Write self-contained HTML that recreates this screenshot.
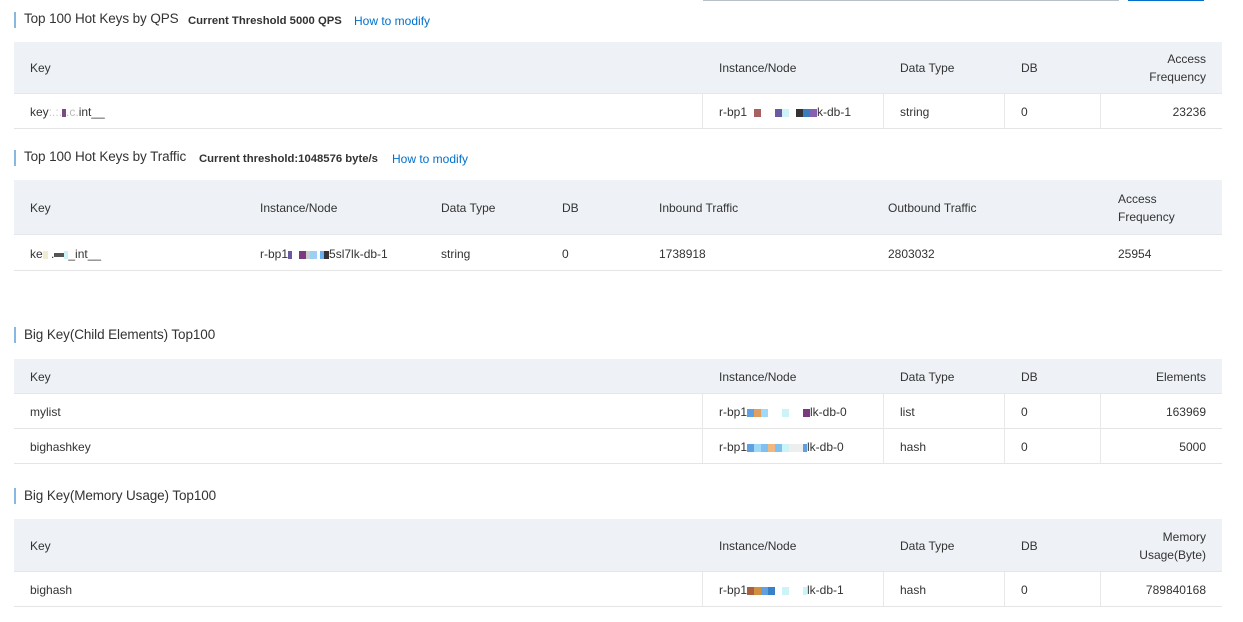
<!DOCTYPE html>
<html><head><meta charset="utf-8"><style>
*{margin:0;padding:0;box-sizing:border-box}
body{width:1243px;height:622px;background:#fff;position:relative;overflow:hidden;font-family:"Liberation Sans",Arial,sans-serif;font-size:12px;color:#333}
div,span{position:absolute;white-space:nowrap}
.bar{left:14px;width:2px;height:16px;background:#88b7e0}
.ti{left:24px;font-size:13.5px;color:#333;line-height:16px;letter-spacing:-0.1px}
.th{font-size:11.3px;font-weight:bold;color:#333;line-height:16px}
.lk{font-size:12px;color:#0070cc;line-height:16px}
.hd{left:14px;width:1208px;background:#eef1f5;border-bottom:1px solid #e3e6ea}
.rw{left:14px;width:1208px;border-bottom:1px solid #e5e5e5}
.c{line-height:14px}
.r{text-align:right;right:37px;line-height:18px}
.v{width:1px;background:#e8e8e8}
i{display:inline-block;width:7px;height:8px;vertical-align:middle}
</style></head><body>
<div style="left:703px;top:0;width:416px;height:1px;background:#b8c0c8"></div>
<div style="left:1128px;top:0;width:76px;height:1px;background:#0070cc"></div>

<div class="bar" style="top:12px"></div>
<div class="ti" style="top:11px">Top 100 Hot Keys by QPS</div>
<div class="th" style="left:188px;top:13px">Current Threshold 5000 QPS</div>
<div class="lk" style="left:354px;top:13px">How to modify</div>
<div class="hd" style="top:42px;height:52px"></div>
<div class="c" style="left:30px;top:61px">Key</div>
<div class="c" style="left:719px;top:61px">Instance/Node</div>
<div class="c" style="left:900px;top:61px">Data Type</div>
<div class="c" style="left:1021px;top:61px">DB</div>
<div class="r" style="top:50px;width:100px">Access<br>Frequency</div>
<div class="rw" style="top:94px;height:35px"></div>
<div class="v" style="left:702px;top:94px;height:34px"></div>
<div class="v" style="left:883px;top:94px;height:34px"></div>
<div class="v" style="left:1004px;top:94px;height:34px"></div>
<div class="v" style="left:1100px;top:94px;height:34px"></div>
<div class="c" style="left:30px;top:105px">key<span style="position:static;color:#ccc">:.:.</span><i style="background:#7a4a86;width:4px"></i><span style="position:static;color:#bbb">.c.</span>int__</div>
<div class="c" style="left:719px;top:105px">r-bp1<i style="background:#fff"></i><i style="background:#a86060"></i><i style="background:#fff"></i><i style="background:#fff"></i><i style="background:#6a5aa0"></i><i style="background:#ccf4f8"></i><i style="background:#fff"></i><i style="background:#333"></i><i style="background:#3a7cc0"></i><i style="background:#8860b0"></i>k-db-1</div>
<div class="c" style="left:900px;top:105px">string</div>
<div class="c" style="left:1021px;top:105px">0</div>
<div class="r" style="top:103px">23236</div>

<div class="bar" style="top:150px"></div>
<div class="ti" style="top:149px">Top 100 Hot Keys by Traffic</div>
<div class="th" style="left:199px;top:151px">Current threshold:1048576 byte/s</div>
<div class="lk" style="left:392px;top:151px">How to modify</div>
<div class="hd" style="top:180px;height:55px"></div>
<div class="c" style="left:30px;top:201px">Key</div>
<div class="c" style="left:260px;top:201px">Instance/Node</div>
<div class="c" style="left:441px;top:201px">Data Type</div>
<div class="c" style="left:562px;top:201px">DB</div>
<div class="c" style="left:659px;top:201px">Inbound Traffic</div>
<div class="c" style="left:888px;top:201px">Outbound Traffic</div>
<div style="left:1118px;top:190px;line-height:18px">Access<br>Frequency</div>
<div class="rw" style="top:235px;height:36px"></div>
<div class="c" style="left:30px;top:247px">ke<i style="background:#f0ecd0;width:5px"></i>&nbsp;.<i style="background:#555;width:10px;height:4px"></i><i style="background:#ccf4f8;width:4px"></i>_int__</div>
<div class="c" style="left:260px;top:247px">r-bp1<i style="background:#6a5aa0;width:4px"></i><i style="background:#fff"></i><i style="background:#7a3a80"></i><i style="background:#ccc;width:4px"></i><i style="background:#9cd0f0"></i><i style="background:#fff;width:3px"></i><i style="background:#6ab0f0;width:4px"></i><i style="background:#333;width:5px"></i>5sl7lk-db-1</div>
<div class="c" style="left:441px;top:247px">string</div>
<div class="c" style="left:562px;top:247px">0</div>
<div class="c" style="left:659px;top:247px">1738918</div>
<div class="c" style="left:888px;top:247px">2803032</div>
<div class="c" style="left:1118px;top:247px">25954</div>

<div class="bar" style="top:327px"></div>
<div class="ti" style="top:327px">Big Key(Child Elements) Top100</div>
<div class="hd" style="top:359px;height:35px"></div>
<div class="c" style="left:30px;top:370px">Key</div>
<div class="c" style="left:719px;top:370px">Instance/Node</div>
<div class="c" style="left:900px;top:370px">Data Type</div>
<div class="c" style="left:1021px;top:370px">DB</div>
<div class="r" style="top:368px">Elements</div>
<div class="rw" style="top:394px;height:35px"></div>
<div class="rw" style="top:429px;height:35px"></div>
<div class="v" style="left:702px;top:394px;height:69px"></div>
<div class="v" style="left:883px;top:394px;height:69px"></div>
<div class="v" style="left:1004px;top:394px;height:69px"></div>
<div class="v" style="left:1100px;top:394px;height:69px"></div>
<div class="c" style="left:30px;top:405px">mylist</div>
<div class="c" style="left:719px;top:405px">r-bp1<i style="background:#5ea0e0"></i><i style="background:#e0a060"></i><i style="background:#a0d8f8"></i><i style="background:#fff;width:14px"></i><i style="background:#ccf4f8"></i><i style="background:#fff;width:14px"></i><i style="background:#7a3a80"></i>lk-db-0</div>
<div class="c" style="left:900px;top:405px">list</div>
<div class="c" style="left:1021px;top:405px">0</div>
<div class="r" style="top:403px">163969</div>
<div class="c" style="left:30px;top:440px">bighashkey</div>
<div class="c" style="left:719px;top:440px">r-bp1<i style="background:#5ea0e0"></i><i style="background:#a0d8f8"></i><i style="background:#80c0f0"></i><i style="background:#f0b880"></i><i style="background:#80c0f0"></i><i style="background:#ccf4f8"></i><i style="background:#eee;width:14px"></i><i style="background:#5ea0e0;width:4px"></i>lk-db-0</div>
<div class="c" style="left:900px;top:440px">hash</div>
<div class="c" style="left:1021px;top:440px">0</div>
<div class="r" style="top:438px">5000</div>

<div class="bar" style="top:488px"></div>
<div class="ti" style="top:488px">Big Key(Memory Usage) Top100</div>
<div class="hd" style="top:519px;height:53px"></div>
<div class="c" style="left:30px;top:539px">Key</div>
<div class="c" style="left:719px;top:539px">Instance/Node</div>
<div class="c" style="left:900px;top:539px">Data Type</div>
<div class="c" style="left:1021px;top:539px">DB</div>
<div class="r" style="top:528px;text-align:right">Memory<br>Usage(Byte)</div>
<div class="rw" style="top:572px;height:35px"></div>
<div class="v" style="left:702px;top:572px;height:34px"></div>
<div class="v" style="left:883px;top:572px;height:34px"></div>
<div class="v" style="left:1004px;top:572px;height:34px"></div>
<div class="v" style="left:1100px;top:572px;height:34px"></div>
<div class="c" style="left:30px;top:583px">bighash</div>
<div class="c" style="left:719px;top:583px">r-bp1<i style="background:#a86040"></i><i style="background:#d09040"></i><i style="background:#5ea0e0"></i><i style="background:#3a80c8"></i><i style="background:#fff;width:7px"></i><i style="background:#ccf4f8"></i><i style="background:#fff;width:14px"></i><i style="background:#ccf4f8;width:4px"></i>lk-db-1</div>
<div class="c" style="left:900px;top:583px">hash</div>
<div class="c" style="left:1021px;top:583px">0</div>
<div class="r" style="top:581px">789840168</div>
</body></html>
